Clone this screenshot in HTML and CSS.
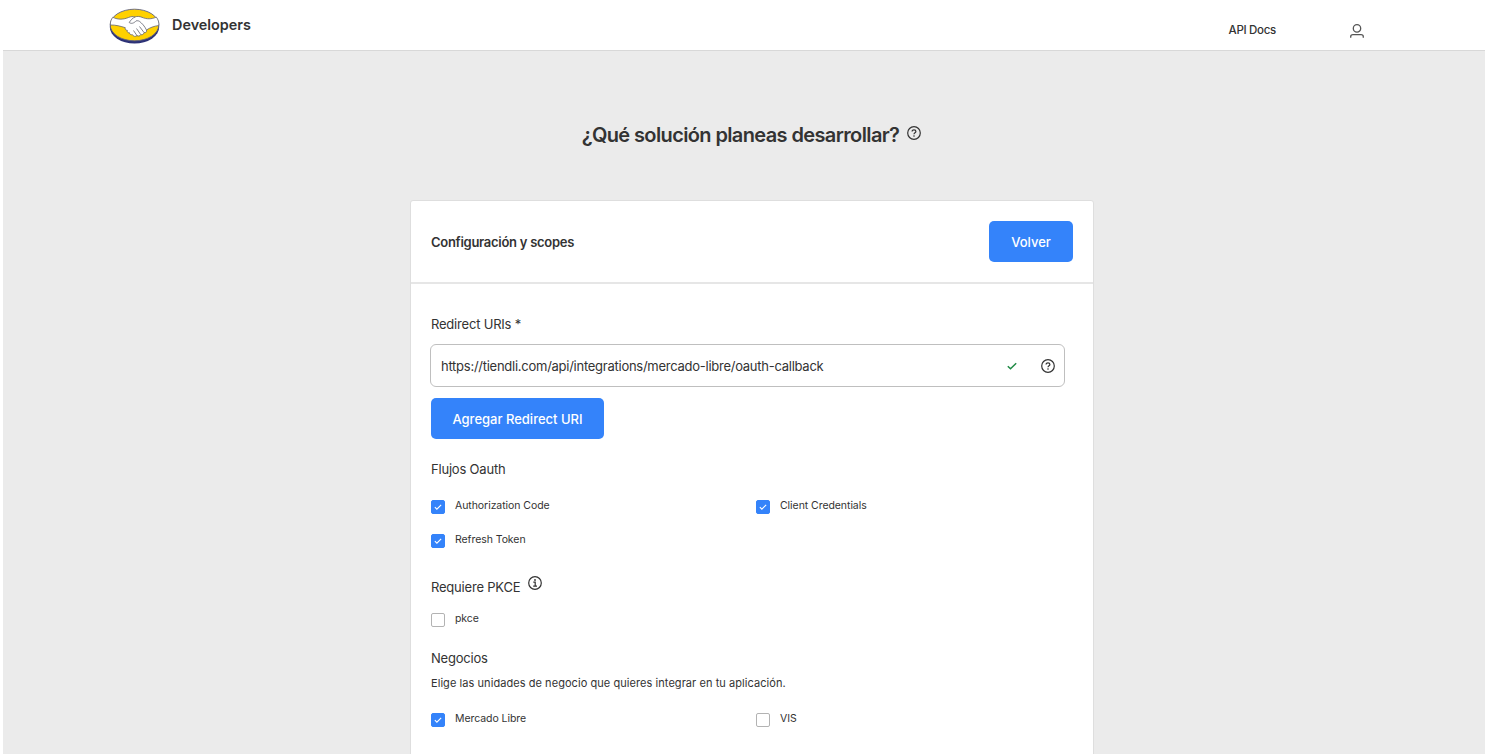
FILE: index.html
```
<!DOCTYPE html>
<html lang="es">
<head>
    <meta charset="UTF-8">
    <meta name="viewport" content="width=device-width, initial-scale=1.0">
    <title>Developers</title>
    <link rel="stylesheet" href="styles.css">
</head>
<body>
    <svg class="sprite">
        <symbol id="help" viewBox="0 0 14 14">
            <circle cx="7" cy="7" r="6.3" fill="none" stroke="currentColor" stroke-width="1.2"/>
            <path d="M5.1 5.6C5.1 4.4 5.9 3.8 7 3.8s1.9.6 1.9 1.6C8.9 6.700 7 6.700 7 8.200" fill="none" stroke="currentColor" stroke-width="1.2"/>
            <circle cx="7" cy="10" r=".8" fill="currentColor"/>
        </symbol>
        <symbol id="info" viewBox="0 0 14 14">
            <circle cx="7" cy="7" r="6.3" fill="none" stroke="currentColor" stroke-width="1.2"/>
            <path d="M5.300 6.200H7.200V10M5.200 10.100H9" fill="none" stroke="currentColor" stroke-width="1.200"/>
            <circle cx="7" cy="4" r=".9" fill="currentColor"/>
        </symbol>
        <symbol id="check" viewBox="0 0 10 8">
            <path d="M.8 4.200 3.500 6.800 9.200 1.200" fill="none" stroke="currentColor" stroke-width="1.500"/>
        </symbol>
    </svg>

    <header class="nav">
        <a class="brand">
            <svg class="logo" viewBox="0 0 50 36">
                <ellipse cx="25" cy="19" rx="24.700" ry="16.500" fill="#2d3277"/>
                <ellipse cx="25" cy="17" rx="24.300" ry="15.800" fill="#ffd100" stroke="#5f6180" stroke-width=".9"/>
                <path d="M3.300 9.300C9 12 14 11.500 19 9.500c2.500-1 4.500-1.300 6.500-.5 2-.9 4.500-.7 7 .3 4.800 2 9.500 2 14.300-.2 2 2.600 2.900 5.300 2.500 8.400-4.800.6-9 2.200-12.300 4.500.6 1.800-.8 3-2.500 2.600-.3 1.800-1.800 2.500-3.300 2-.7 1.500-2.300 1.900-3.700 1-1.700 1.400-3.900.8-4.500-.9-1.800.4-2.900-.5-3-1.900-1.700.1-2.700-1-2.200-2.500-1.700 0-2.500-1.200-2-2.600C11.500 18.300 6 16.800.9 17c-.3-2.800.6-5.400 2.400-7.700z" fill="#fff" stroke="#62636e" stroke-width=".8"/>
                <path d="M25.500 9c-2.500 1-4.500 3.500-5.800 5.500 2 1.600 4.800.8 6.800-1.600 1.300-.3 2.500-.2 3.500.5 2.600 2 5 4.600 7 8.600M30 18.500l4.500 6M27 20.500l4.200 6M24 22.500l3.500 5.200" fill="none" stroke="#62636e" stroke-width=".8"/>
            </svg>
            <span class="brand-name">Developers</span>
        </a>
        <a class="nav-link">API Docs</a>
        <svg class="user" viewBox="0 0 14 14" fill="none" stroke="#555" stroke-width="1.300">
            <circle cx="7" cy="4.400" r="3.700"/>
            <path d="M.7 13.800v-1c0-1.400.9-2.100 2.300-2.100h8c1.400 0 2.300.7 2.300 2.100v1"/>
        </svg>
    </header>

    <main class="page">
        <h1 class="title"><span>¿Qué solución planeas desarrollar?</span><svg class="icon"><use href="#help"/></svg></h1>

        <section class="card">
            <div class="card-header">
                <h2>Configuración y scopes</h2>
                <button class="btn btn-back">Volver</button>
            </div>
            <form class="card-body">
                <div class="label">Redirect URIs *</div>
                <div class="field">
                    <span class="url">https://tiendli.com/api/integrations/mercado-libre/oauth-callback</span>
                    <svg class="valid"><use href="#check"/></svg>
                    <svg class="icon"><use href="#help"/></svg>
                </div>
                <button type="button" class="btn btn-add">Agregar Redirect URI</button>

                <div class="label oauth-label">Flujos Oauth</div>
                <div class="options">
                    <div class="option"><span class="box checked"><svg><use href="#check"/></svg></span><span>Authorization Code</span></div>
                    <div class="option"><span class="box checked"><svg><use href="#check"/></svg></span><span>Client Credentials</span></div>
                    <div class="option"><span class="box checked"><svg><use href="#check"/></svg></span><span>Refresh Token</span></div>
                </div>

                <div class="label pkce-label"><span>Requiere PKCE</span><svg class="icon"><use href="#info"/></svg></div>
                <div class="options">
                    <div class="option"><span class="box"></span><span>pkce</span></div>
                </div>

                <div class="label business-label">Negocios</div>
                <p class="hint">Elige las unidades de negocio que quieres integrar en tu aplicación.</p>
                <div class="options">
                    <div class="option"><span class="box checked"><svg><use href="#check"/></svg></span><span>Mercado Libre</span></div>
                    <div class="option"><span class="box"></span><span>VIS</span></div>
                </div>
            </form>
        </section>
    </main>
</body>
</html>
```

FILE: styles.css
```
* {
    box-sizing: border-box;
}
body {
    margin: 0;
    height: 756px;
    overflow: hidden;
    background: #fff;
    color: #333;
    font-family: Inter, "Open Sans", sans-serif;
}
.sprite {
    display: none;
}
.nav {
    display: flex;
    height: 51px;
    margin: 0 1px 0 3px;
    padding: 0 121px 0 106px;
    border-bottom: 1px solid #d8d8d8;
}
.brand {
    display: flex;
    flex: 1;
}
.logo {
    width: 51px;
    height: 36px;
    margin-top: 8px;
}
.brand-name {
    margin: 16px 0 0 12px;
    font-size: 14.4px;
    line-height: 18px;
    font-weight: 600;
}
.nav-link {
    margin-top: 22px;
    font-size: 11.5px;
    line-height: 16px;
    font-weight: 500;
    letter-spacing: -0.3px;
}
.user {
    width: 14px;
    height: 14px;
    margin: 24px 0 0 74px;
}
.page {
    height: 703px;
    margin: 0 1px 0 3px;
    overflow: hidden;
    background: #ebebeb;
}
.title {
    display: flex;
    justify-content: center;
    gap: 8px;
    margin: 70px 0 0;
    padding-left: 15px;
    font-size: 20px;
    line-height: 29px;
    font-weight: 600;
    letter-spacing: -0.62px;
}
.title .icon {
    margin-top: 5px;
}
.icon {
    flex: none;
    width: 14px;
    height: 14px;
}
.card {
    width: 684px;
    height: 600px;
    margin: 50px 0 0 407px;
    border: 1px solid #dedede;
    border-radius: 3px;
    background: #fff;
}
.card-header {
    display: flex;
    align-items: center;
    justify-content: space-between;
    height: 83px;
    padding: 0 20px;
    border-bottom: 2px solid #e6e6e6;
}
.card-header h2 {
    margin: 0;
    font-size: 13px;
    font-weight: 600;
    letter-spacing: -0.28px;
}
.btn {
    display: block;
    height: 41px;
    padding: 0;
    border: none;
    border-radius: 5px;
    background: #3483fa;
    color: #fff;
    font-family: inherit;
    font-size: 13px;
    font-weight: 500;
}
.btn-back {
    width: 84px;
}
.btn-add {
    width: 173px;
    margin-top: 11px;
}
.card-body {
    padding: 30px 28px 0 20px;
}
.label {
    font-size: 13px;
    line-height: 20px;
    letter-spacing: -0.2px;
}
.field {
    display: flex;
    align-items: center;
    height: 43px;
    margin: 10px 0 0 -1px;
    padding: 0 9px 0 10px;
    border: 1px solid #bfbfbf;
    border-radius: 6px;
}
.url {
    flex: 1;
    font-size: 13px;
    letter-spacing: -0.26px;
}
.valid {
    width: 10px;
    height: 8px;
    margin-right: 24px;
    color: #1f8a45;
}
.oauth-label {
    margin: 20px 0 17px;
}
.options {
    display: grid;
    grid-template-columns: 325px 1fr;
    row-gap: 14px;
}
.option {
    display: flex;
    height: 20px;
    font-size: 10.5px;
    line-height: 20px;
    letter-spacing: -0.06px;
}
.box {
    display: flex;
    align-items: center;
    justify-content: center;
    width: 14px;
    height: 14px;
    margin: 4px 10px 0 0;
    border: 1px solid #b3b3b3;
    border-radius: 2px;
}
.box.checked {
    border-color: #3483fa;
    background: #3483fa;
    color: #fff;
}
.box svg {
    width: 8px;
    height: 6px;
}
.pkce-label {
    display: flex;
    margin: 27px 0 12px;
}
.pkce-label .icon {
    margin: -1px 0 0 8px;
}
.business-label {
    margin-top: 19px;
}
.hint {
    margin: 6px 0 17px;
    font-size: 11px;
    line-height: 18px;
    letter-spacing: 0.06px;
}
```
